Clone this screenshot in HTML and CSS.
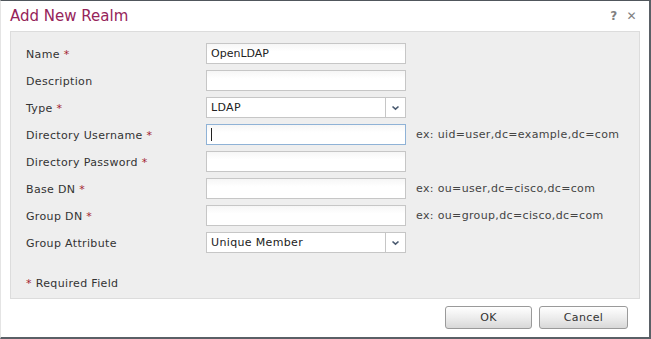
FILE: index.html
```html
<!DOCTYPE html>
<html lang="en">
  <head>
    <meta charset="UTF-8">
    <title>Add New Realm</title>
    <link rel="stylesheet" href="styles.css">
  </head>
  <body>
    <div class="dialog">
      <div class="titlebar">
        <h1>Add New Realm</h1>
        <div class="tools"><span class="help">?</span><span class="close">&#x2715;</span></div>
      </div>
      <div class="panel">
        <div class="form">
          <label>Name <span class="req">*</span></label>
          <div class="field"><input type="text" value="OpenLDAP"></div>
          <div class="hint"></div>

          <label>Description</label>
          <div class="field"><input type="text"></div>
          <div class="hint"></div>

          <label>Type <span class="req">*</span></label>
          <div class="field select"><span>LDAP</span><span class="arrow"><svg width="9" height="6" viewBox="0 0 9 6"><path d="M1.5 1.5 L4.5 4.2 L7.5 1.5" fill="none" stroke="#4a5a70" stroke-width="1.6"/></svg></span></div>
          <div class="hint"></div>

          <label>Directory Username <span class="req">*</span></label>
          <div class="field focus"><input type="text"><span class="caret"></span></div>
          <div class="hint">ex: uid=user,dc=example,dc=com</div>

          <label>Directory Password <span class="req">*</span></label>
          <div class="field"><input type="password"></div>
          <div class="hint"></div>

          <label>Base DN <span class="req">*</span></label>
          <div class="field"><input type="text"></div>
          <div class="hint">ex: ou=user,dc=cisco,dc=com</div>

          <label>Group DN <span class="req">*</span></label>
          <div class="field"><input type="text"></div>
          <div class="hint">ex: ou=group,dc=cisco,dc=com</div>

          <label>Group Attribute</label>
          <div class="field select"><span>Unique Member</span><span class="arrow"><svg width="9" height="6" viewBox="0 0 9 6"><path d="M1.5 1.5 L4.5 4.2 L7.5 1.5" fill="none" stroke="#4a5a70" stroke-width="1.6"/></svg></span></div>
          <div class="hint"></div>
        </div>
        <div class="note"><span class="req">*</span> Required Field</div>
      </div>
      <div class="footer">
        <button class="btn ok">OK</button>
        <button class="btn cancel">Cancel</button>
      </div>
    </div>
  </body>
</html>
```

FILE: styles.css
```css
body {
  margin: 0;
  background: #ffffff;
  font-family: 'DejaVu Sans', Verdana, sans-serif;
  font-size: 11px;
  letter-spacing: 0.35px;
  color: #333333;
}

.dialog {
  box-sizing: border-box;
  width: 651px;
  height: 339px;
  background: #ffffff;
  border-top: 1px solid #50565c;
  border-right: 2px solid #5a6066;
  border-bottom: 2px solid #5a6066;
  border-left: 1px solid #e4e4e4;
  display: flex;
  flex-direction: column;
}

.titlebar {
  height: 30px;
  display: flex;
  align-items: center;
  justify-content: space-between;
  padding: 0 12px 0 9px;
}
.titlebar h1 {
  margin: 0;
  font-size: 15px;
  font-weight: normal;
  letter-spacing: 0;
  color: #96245a;
}
.tools {
  display: flex;
  gap: 9px;
  color: #808080;
  font-size: 12px;
  font-weight: bold;
}
.close { font-weight: normal; font-size: 12px; }

.panel {
  margin: 0 9px;
  height: 268px;
  box-sizing: border-box;
  background: #eeeeee;
  border: 1px solid #dcdcdc;
  padding: 11px 15px 0 15px;
}

.form {
  display: grid;
  grid-template-columns: 180px 200px auto;
  grid-auto-rows: 21px;
  row-gap: 6px;
  align-items: center;
}
.form label { padding-top: 1px; }
.req { color: #a3222e; }

.field {
  box-sizing: border-box;
  height: 21px;
  position: relative;
  background: linear-gradient(#f6f6f6, #ffffff 40%);
  border: 1px solid #c6c6c6;
  display: flex;
  align-items: center;
}
.field input {
  border: 0;
  background: transparent;
  width: 100%;
  height: 100%;
  padding: 0 0 0 4px;
  font: inherit;
  color: #222222;
  outline: none;
}
.field.focus {
  border-color: #8fb2d6;
}
.caret {
  position: absolute;
  left: 4px;
  top: 3px;
  width: 1px;
  height: 13px;
  background: #222222;
}
.select {
  background: #ffffff;
  justify-content: space-between;
  padding-left: 4px;
  color: #222222;
}
.arrow {
  width: 19px;
  height: 100%;
  border-left: 1px solid #c6c6c6;
  display: flex;
  align-items: center;
  justify-content: center;
}
.hint {
  padding-left: 10px;
  color: #444444;
}

.note {
  margin-top: 24px;
}

.footer {
  flex: 1;
  display: flex;
  justify-content: flex-end;
  align-items: flex-start;
  gap: 7px;
  padding: 7px 21px 0 0;
}
.btn {
  height: 23px;
  border: 1px solid #9a9a9a;
  border-radius: 3px;
  background: linear-gradient(#ffffff, #e9e9e9 60%, #d8d8d8);
  font-family: 'DejaVu Sans', Verdana, sans-serif;
  font-size: 11px;
  letter-spacing: 0.35px;
  color: #333333;
  padding: 0;
}
.ok { width: 87px; }
.cancel { width: 89px; }
```
